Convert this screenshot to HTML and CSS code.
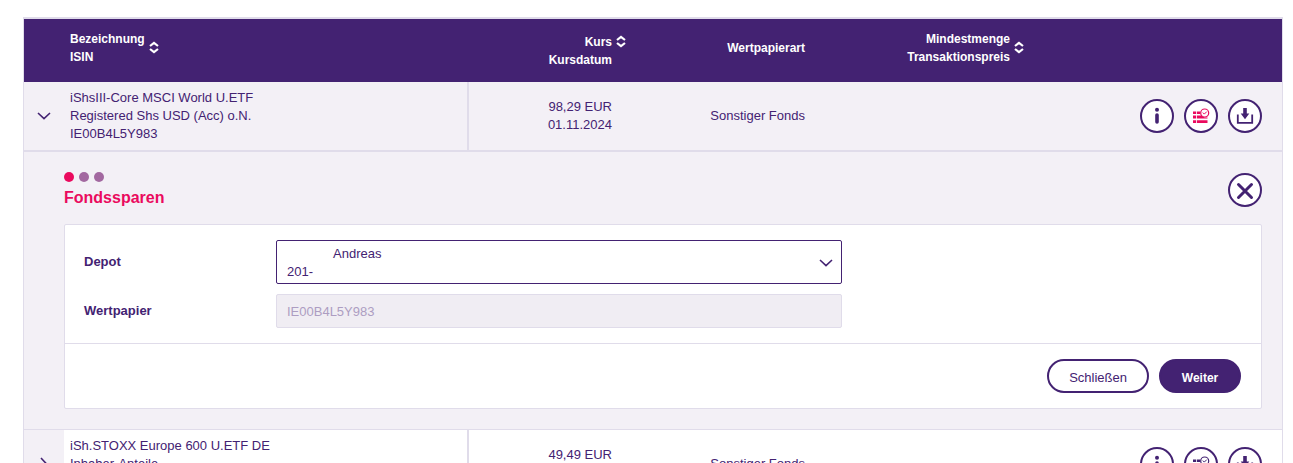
FILE: index.html
```html
<!DOCTYPE html>
<html lang="de">
<head>
<meta charset="utf-8">
<title>Fondssparen</title>
<link rel="stylesheet" href="styles.css">
</head>
<body>
<svg class="sprite" aria-hidden="true">
  <symbol id="sort" viewBox="0 0 10 14"><path d="M1 5 5 1.800 9 5M1 8l4 3.200L9 8" fill="none" stroke="currentColor" stroke-width="2.200"/></symbol>
  <symbol id="info" viewBox="0 0 34 34"><circle cx="17" cy="10.700" r="2" fill="currentColor"/><path d="M17 16v7" stroke="currentColor" stroke-width="3.600" stroke-linecap="round"/></symbol>
  <symbol id="plan" viewBox="0 0 34 34">
    <path d="M9 12.500h3.200V15H9zM13 12.500h3.200V15H13zM9 16.600h3.200v2.800H9zM13 16.600h4.500l3 2h3v.8H13zM9 21.200h3.200V24H9zM13 21.200h10.500V24H13z" fill="currentColor"/>
    <circle cx="20.700" cy="14" r="4" fill="#fff" stroke="currentColor" stroke-width="1.200"/>
    <path d="m18.800 13.600 1.500 1.500 2.500-2.500" fill="none" stroke="currentColor"/>
  </symbol>
  <symbol id="load" viewBox="0 0 34 34"><path d="M15.200 9h3.600v5.500h2.500L17 20.200l-4.300-5.700h2.500z" fill="currentColor"/><path d="M9.800 15.500v8.300h14.400v-8.300" fill="none" stroke="currentColor" stroke-width="1.800"/></symbol>
  <symbol id="close" viewBox="0 0 34 34"><path d="m10.500 11.500 13 13m0-13-13 13" stroke="currentColor" stroke-width="3" stroke-linecap="round"/></symbol>
  <symbol id="down" viewBox="0 0 14 8"><path d="m1 1 6 5.600L13 1" fill="none" stroke="currentColor" stroke-width="1.600"/></symbol>
  <symbol id="right" viewBox="0 0 8 14"><path d="m1 1 5.600 6L1 13" fill="none" stroke="currentColor" stroke-width="1.600"/></symbol>
</svg>
<main class="page">
<table class="funds">
  <colgroup><col class="c-toggle"><col><col class="c-price"><col class="c-type"><col class="c-min"><col class="c-actions"></colgroup>
  <thead>
    <tr>
      <th></th>
      <th class="name"><div class="head"><span>Bezeichnung<br>ISIN</span><button class="sort" aria-label="Nach Bezeichnung sortieren"><svg><use href="#sort"/></svg></button></div></th>
      <th class="price"><div class="head">Kurs<button class="sort" aria-label="Nach Kurs sortieren"><svg><use href="#sort"/></svg></button></div><div class="subhead">Kursdatum</div></th>
      <th class="num">Wertpapierart</th>
      <th class="min"><div class="head"><span>Mindestmenge<br>Transaktionspreis</span><button class="sort" aria-label="Nach Mindestmenge sortieren"><svg><use href="#sort"/></svg></button></div></th>
      <th></th>
    </tr>
  </thead>
  <tbody>
    <tr class="open">
      <td class="toggle"><button class="expand" aria-label="Zuklappen" aria-expanded="true"><svg class="down"><use href="#down"/></svg></button></td>
      <td class="name">iShsIII-Core MSCI World U.ETF<br>Registered Shs USD (Acc) o.N.<br>IE00B4L5Y983</td>
      <td class="num">98,29 EUR<br>01.11.2024</td>
      <td class="num">Sonstiger Fonds</td>
      <td></td>
      <td><div class="actions">
        <button class="round" aria-label="Information"><svg><use href="#info"/></svg></button>
        <button class="round active" aria-label="Fondssparen"><svg><use href="#plan"/></svg></button>
        <button class="round" aria-label="Kaufen"><svg><use href="#load"/></svg></button>
      </div></td>
    </tr>
    <tr class="detail">
      <td colspan="6">
        <section class="savings">
          <header class="savings-head">
            <div>
              <div class="steps"><i class="dot current"></i><i class="dot"></i><i class="dot"></i></div>
              <h2>Fondssparen</h2>
            </div>
            <button class="round" aria-label="Formular schließen"><svg><use href="#close"/></svg></button>
          </header>
          <form class="panel">
            <div class="fields">
              <label for="depot">Depot</label>
              <select id="depot" class="field">
                <button type="button"><selectedcontent></selectedcontent><svg class="down"><use href="#down"/></svg></button>
                <option selected><span class="holder">Andreas</span> <span class="number">201-</span></option>
              </select>
              <label for="paper">Wertpapier</label>
              <input id="paper" class="field" value="IE00B4L5Y983" disabled>
            </div>
            <footer class="buttons">
              <button type="button" class="pill">Schließen</button>
              <button type="button" class="pill primary">Weiter</button>
            </footer>
          </form>
        </section>
      </td>
    </tr>
    <tr>
      <td class="toggle"><button class="expand" aria-label="Aufklappen" aria-expanded="false"><svg class="right"><use href="#right"/></svg></button></td>
      <td class="name">iSh.STOXX Europe 600 U.ETF DE<br>Inhaber-Anteile<br>&nbsp;</td>
      <td class="num">49,49 EUR<br>&nbsp;</td>
      <td class="num">Sonstiger Fonds</td>
      <td></td>
      <td><div class="actions">
        <button class="round" aria-label="Information"><svg><use href="#info"/></svg></button>
        <button class="round" aria-label="Fondssparen"><svg><use href="#plan"/></svg></button>
        <button class="round" aria-label="Kaufen"><svg><use href="#load"/></svg></button>
      </div></td>
    </tr>
  </tbody>
</table>
</main>
</body>
</html>
```

FILE: styles.css
```css
:root {
  --purple: #432272;
  --line: #e0dcea;
  --tint: #f3f0f6;
  --pink: #ea0a5e;
}
* { box-sizing: border-box; }
body {
  margin: 0;
  height: 100vh;
  overflow: hidden;
  background: #fff;
  color: var(--purple);
  font: 13px/18px "Liberation Sans", Arial, sans-serif;
}
button, input, select { font: inherit; color: inherit; }
button { padding: 0; border: 0; background: none; cursor: pointer; }
svg { display: block; }
.sprite { display: none; }
.page { padding: 17px 10px 0 23px; }

.funds {
  width: 100%;
  table-layout: fixed;
  border-collapse: separate;
  border-spacing: 0;
  border: 1px solid var(--line);
  border-top-width: 2px;
}
.c-toggle { width: 40px; }
.c-price { width: 163px; }
.c-type { width: 193px; }
.c-min { width: 205px; }
.c-actions { width: 252px; }

th {
  height: 63px;
  padding: 0 0 6px;
  background: var(--purple);
  color: #fff;
  font-size: 12px;
  text-align: left;
}
th.name { padding-left: 6px; }
th.price { padding: 0 6px 0 0; text-align: right; }
th.min { padding-right: 6px; text-align: right; }
th.num { padding-right: 20px; }
.head { display: flex; align-items: center; gap: 4px; }
.price .head, .min .head { justify-content: flex-end; }
.subhead { padding-right: 14px; }
.sort svg { width: 10px; height: 14px; }
.num { text-align: right; }

td { padding: 7px 0; }
td.num { padding-right: 20px; }
td.name { padding-left: 6px; border-right: 2px solid var(--line); }
.open td { background: var(--tint); border-bottom: 2px solid var(--line); }
td.toggle { background: var(--tint); }
.expand { display: flex; width: 40px; height: 34px; align-items: center; justify-content: center; }
.down { width: 14px; height: 8px; }
.right { width: 8px; height: 14px; }

.actions { display: flex; justify-content: flex-end; gap: 10px; padding-right: 20px; }
.round {
  width: 34px;
  height: 34px;
  border: 2px solid var(--purple);
  border-radius: 50%;
  background: #fff;
}
.round svg { width: 34px; height: 34px; margin: -2px; }
.active svg { color: var(--pink); }

.detail td { padding: 20px 20px 20px 40px; background: var(--tint); border-bottom: 1px solid var(--line); }
.savings-head { display: flex; justify-content: space-between; align-items: center; margin-bottom: 16px; }
.steps { display: flex; gap: 5px; margin-bottom: 6px; }
.dot { width: 10px; height: 10px; border-radius: 50%; background: #a268a0; }
.dot.current { background: var(--pink); }
h2 { margin: 0; font-size: 16px; line-height: 20px; color: var(--pink); }

.panel { background: #fff; border: 1px solid var(--line); border-radius: 2px; }
.fields {
  display: grid;
  grid-template-columns: 192px minmax(0, 566px);
  gap: 10px 0;
  align-items: center;
  padding: 15px 19px;
}
.fields label { font-weight: bold; }
.field { width: 100%; margin: 0; padding: 0 10px; border: 1px solid var(--line); border-radius: 2px; }
input.field { height: 34px; background: #f0edf3; color: #ad9dc2; }
select.field {
  appearance: base-select;
  height: 44px;
  padding: 2px 8px 0 10px;
  border-color: var(--purple);
  background: #fff;
}
select.field::picker-icon { display: none; }
select.field > button { display: flex; flex: 1; align-items: center; justify-content: space-between; text-align: left; }
.holder { display: block; padding-left: 46px; }
.number { display: block; }

.buttons { display: flex; justify-content: flex-end; gap: 10px; padding: 15px 20px; border-top: 1px solid var(--line); }
.pill { height: 34px; padding: 3px 20px 0; border: 2px solid var(--purple); border-radius: 17px; background: #fff; }
.primary { min-width: 82px; background: var(--purple); color: #fff; font-size: 12px; font-weight: bold; }
```
